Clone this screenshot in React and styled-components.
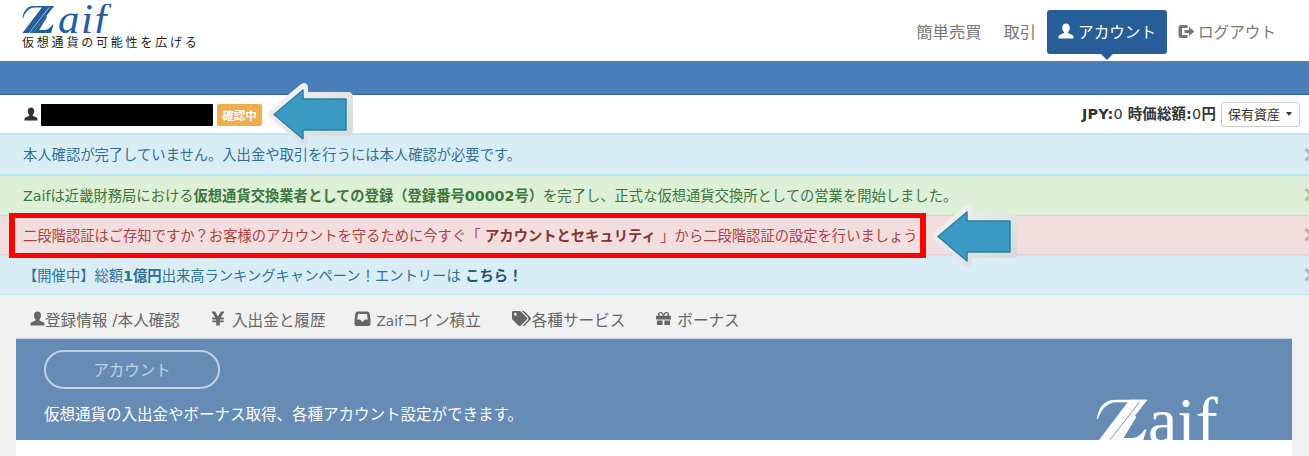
import React from "react";
import styled, { createGlobalStyle } from "styled-components";
import { FaTags, FaGift } from "react-icons/fa";

const GlobalStyle = createGlobalStyle`
  html, body { margin: 0; padding: 0; }
  body {
    background: #f1f1f1;
    font-family: "DejaVu Sans", "Noto Sans CJK JP", sans-serif;
    font-size: 14px;
    color: #333;
    overflow: hidden;
  }
`;

const Page = styled.div`
  position: relative;
  width: 1309px;
  height: 456px;
  overflow: hidden;
`;

const Header = styled.header`
  height: 61px;
  background: #fff;
  display: flex;
  justify-content: space-between;
  align-items: flex-start;
  padding: 0 22px;
  box-sizing: border-box;
`;

const Brand = styled.div`
  display: flex;
  flex-direction: column;
  width: 180px;
  padding-top: 4px;
`;

const LogoRow = styled.div`
  display: flex;
  align-items: flex-end;
  color: ${(p) => p.$color};
`;

const LogoText = styled.span`
  font-family: "Liberation Serif", serif;
  font-style: italic;
  font-size: 43px;
  line-height: 29px;
  height: 29px;
  padding-right: 6px;
  margin-left: -4px;
  letter-spacing: 1.5px;
  overflow: hidden;
`;

const Tagline = styled.div`
  font-size: 12px;
  line-height: 15px;
  margin-top: 3px;
  letter-spacing: 2.8px;
  color: #222;
  white-space: nowrap;
`;

const Nav = styled.nav`
  display: flex;
  align-items: flex-start;
  padding-top: 10px;
`;

const NavItem = styled.a`
  position: relative;
  display: flex;
  align-items: center;
  gap: ${(p) => (p.$active ? 4 : 3)}px;
  height: 44px;
  box-sizing: border-box;
  padding: 0 11px 2px;
  border-radius: 3px;
  font-size: ${(p) => p.$size || 15.6}px;
  color: ${(p) => (p.$active ? "#fff" : "#777")};
  background: ${(p) => (p.$active ? "#275d98" : "transparent")};
  white-space: nowrap;

  ${(p) =>
    p.$active &&
    `&::after {
      content: "";
      position: absolute;
      left: 50%;
      bottom: -6px;
      margin-left: -6px;
      border-left: 6px solid transparent;
      border-right: 6px solid transparent;
      border-top: 6px solid #275d98;
    }`}
`;

const BlueBar = styled.div`
  height: 33px;
  background: #4a7ebb;
  border-bottom: 1px solid #2f659f;
`;

const UserRow = styled.div`
  height: 38px;
  background: #fff;
  border-bottom: 1px solid #c9e6ef;
  display: flex;
  align-items: center;
  justify-content: space-between;
  padding: 0 9px 0 24px;
`;

const UserInfo = styled.div`
  display: flex;
  align-items: center;
`;

const Redacted = styled.div`
  width: 172px;
  height: 22px;
  background: #000;
  margin: 2px 4px 0 3px;
  border-radius: 1px;
`;

const Badge = styled.span`
  display: inline-flex;
  align-items: center;
  justify-content: center;
  width: 45px;
  height: 22px;
  background: #f0ad4e;
  color: #fff;
  font-size: 11.5px;
  font-weight: 700;
  border-radius: 2px;
  margin-top: 1px;
`;

const Balance = styled.div`
  display: flex;
  align-items: center;
  gap: 5px;
  font-size: 14.4px;
  color: #333;
  white-space: nowrap;
`;

const BalanceText = styled.span`
  letter-spacing: 0.2px;
  margin-bottom: 3px;
`;

const Strong = styled.b`
  font-weight: 700;
`;

const SelectButton = styled.button`
  display: flex;
  align-items: center;
  gap: 6px;
  height: 25px;
  width: 79px;
  padding: 0 0 1px 6px;
  border: 1px solid #ccc;
  border-radius: 3px;
  background: #fff;
  font-family: inherit;
  font-size: 13px;
  color: #333;
  white-space: nowrap;
`;

const Caret = styled.span`
  width: 0;
  height: 0;
  border-left: 3.5px solid transparent;
  border-right: 3.5px solid transparent;
  border-top: 4px solid #333;
`;

const Alert = styled.div`
  position: relative;
  box-sizing: border-box;
  height: ${(p) => p.$h || 40}px;
  display: flex;
  align-items: center;
  padding: 0 0 2px 23px;
  font-size: 14.3px;
  white-space: pre;
  color: ${(p) => p.$color};
  background: ${(p) => p.$bg};
  border-top: 1px solid ${(p) => p.$border};
  border-bottom: 1px solid ${(p) => p.$border};
`;

const AlertBold = styled.b`
  font-weight: 700;
  color: ${(p) => p.$color || "inherit"};
`;

const Close = styled.span`
  position: absolute;
  left: 1303px;
  top: 50%;
  transform: translateY(-50%);
  font-family: "Liberation Sans", sans-serif;
  font-size: 28px;
  font-weight: 700;
  line-height: 1;
  color: #000;
  opacity: 0.2;
`;

const Tabs = styled.div`
  height: 43px;
  display: flex;
  align-items: center;
  padding: 4px 0 0 30px;
  box-sizing: border-box;
`;

const Tab = styled.a`
  display: flex;
  align-items: center;
  gap: ${(p) => p.$gap || 0}px;
  margin-right: ${(p) => p.$mr || 0}px;
  font-size: 15.6px;
  color: #666;
  white-space: nowrap;
  svg { flex: none; }
`;

const TabLatin = styled.span`
  font-size: 13.6px;
`;

const Content = styled.main`
  margin: 0 17px 0 16px;
  background: #fff;
  height: 118px;
`;

const Hero = styled.section`
  position: relative;
  height: 102px;
  box-sizing: border-box;
  background: #668cb6;
  border-top: 1px solid #c8d4e0;
  padding: 11px 28px 0;
  overflow: hidden;
`;

const PillButton = styled.div`
  width: 176px;
  height: 39px;
  box-sizing: border-box;
  border: 2px solid #c2d1e2;
  border-radius: 20px;
  padding-bottom: 2px;
  display: flex;
  align-items: center;
  justify-content: center;
  font-size: 15.5px;
  color: #c2d1e2;
`;

const HeroText = styled.p`
  margin: 15px 0 0;
  font-size: 15.5px;
  line-height: 22px;
  color: #fff;
  white-space: nowrap;
`;

const HeroLogo = styled.div`
  position: absolute;
  left: 1080px;
  top: 59px;
`;

const HeroLogoText = styled.span`
  font-family: "Liberation Serif", serif;
  font-size: 66px;
  line-height: 44px;
  height: 44px;
  color: #fff;
  margin-left: -12px;
`;

const Highlight = styled.div`
  position: absolute;
  left: 9px;
  top: 213px;
  width: 917px;
  height: 45px;
  box-sizing: border-box;
  border: solid #fe0000;
  border-width: 5px 6px;
  pointer-events: none;
`;

const ArrowWrap = styled.div`
  position: absolute;
  left: ${(p) => p.$x}px;
  top: ${(p) => p.$y}px;
  line-height: 0;
`;

const UserIcon = ({ size = 14, color = "currentColor" }) => (
  <svg width={size} height={size} viewBox="0 0 14 14" fill={color}>
    <path d="M7 0.5c2 0 3.3 1.5 3.3 3.6 0 1.5-.6 2.9-1.4 3.7-.3.4-.2 1 .3 1.2l2.9 1.2c.9.4 1.4 1 1.4 1.9v1.4H.5v-1.4c0-.9.5-1.5 1.4-1.9l2.9-1.2c.5-.2.6-.8.3-1.2-.8-.8-1.4-2.2-1.4-3.7C3.7 2 5 .5 7 .5z" />
  </svg>
);

const LogoutIcon = () => (
  <svg width="17" height="15" viewBox="0 0 17 15" fill="#777">
    <path d="M3 1h6.5v3H4.5a.5.5 0 0 0-.5.5v6a.5.5 0 0 0 .5.5h5v3H3a2.5 2.5 0 0 1-2.5-2.5v-8A2.5 2.5 0 0 1 3 1z" />
    <path d="M6.5 6h4.5V3l5.5 4.5L11 12V9H6.5z" />
  </svg>
);

const YenIcon = () => (
  <svg width="14" height="15" viewBox="0 0 14 15" fill="#666">
    <path d="M0.5 0.5h3.6L7 5.6 9.9 0.5h3.6L9.7 6.6h3v1.8H8.8v1.1h3.9v1.8H8.8v3.2H5.2v-3.2H1.3V9.5h3.9V8.4H1.3V6.6h3z" />
  </svg>
);

const InboxIcon = () => (
  <svg width="17" height="15" viewBox="0 0 17 15">
    <path d="M3.5.5h10a2 2 0 0 1 2 1.6l1 6.4v4.5a2 2 0 0 1-2 2H2.5a2 2 0 0 1-2-2V8.5l1-6.4a2 2 0 0 1 2-1.6z" fill="#666" />
    <path d="M4 3h9l.8 5.5h-2.8l-2.5 2.6L6 8.5H3.2z" fill="#f1f1f1" />
  </svg>
);

const ZMark = ({ width, height, color }) => (
  <svg width={width} height={height} viewBox="0 0 40 28" fill={color}>
    <path d="M0.5 13C1.5 5.5 5.5 1 12 1h20l-1 1.6H13C7.5 2.6 3.5 6.5 1.2 13z" />
    <path d="M21 1h7L7 28H0.5z" />
    <path d="M28.6 1h3.6L11 28H7.5z" />
    <path d="M11 28l13-17 1.2.8-8 13.2h4.5c3.5 0 6.5-1.5 8.8-5.5l1 .3-2.5 8.2z" />
  </svg>
);

const BlueArrow = () => (
  <svg width="85" height="64" viewBox="0 0 85 64">
    <defs>
      <linearGradient id="arrowEdge" x1="0" y1="0" x2="1" y2="1">
        <stop offset="0" stopColor="#f6f6f6" />
        <stop offset="1" stopColor="#d6d6d6" />
      </linearGradient>
    </defs>
    <path
      d="M36 1c2 0 4 2 4 4v5h40c3 0 5 2 5 5v34c0 3-2 5-5 5H40v5c0 2-2 4-4 4-1 0-3-1-4-2L2 36c-2-2-2-6 0-8L32 3c1-1 3-2 4-2z"
      fill="url(#arrowEdge)"
    />
    <path
      d="M35 8v9h43v31H35v9L6 32.5z"
      fill="#3b9ac4"
      stroke="#2d7ea6"
      strokeWidth="1.5"
      strokeLinejoin="round"
    />
  </svg>
);

export default function App() {
  return (
    <Page>
      <GlobalStyle />
      <Header>
        <Brand>
          <LogoRow $color="#235f9f">
            <ZMark width={40} height={28} color="#235f9f" />
            <LogoText>aif</LogoText>
          </LogoRow>
          <Tagline>仮想通貨の可能性を広げる</Tagline>
        </Brand>
        <Nav>
          <NavItem $size={16.3}>簡単売買</NavItem>
          <NavItem $size={16.3}>取引</NavItem>
          <NavItem $active>
            <UserIcon size={16} color="#fff" />
            アカウント
          </NavItem>
          <NavItem>
            <LogoutIcon />
            ログアウト
          </NavItem>
        </Nav>
      </Header>
      <BlueBar />
      <UserRow>
        <UserInfo>
          <UserIcon size={14} color="#333" />
          <Redacted />
          <Badge>確認中</Badge>
        </UserInfo>
        <Balance>
          <BalanceText>
            <Strong>JPY:</Strong>0 <Strong>時価総額:</Strong>0<Strong>円</Strong>
          </BalanceText>
          <SelectButton>
            保有資産
            <Caret />
          </SelectButton>
        </Balance>
      </UserRow>
      <Alert $h={41} $bg="#d9edf7" $border="#bce8f1" $color="#31708f">
        本人確認が完了していません。入出金や取引を行うには本人確認が必要です。
        <Close>×</Close>
      </Alert>
      <Alert $bg="#dff0d8" $border="#d6e9c6" $color="#3c763d">
        Zaifは近畿財務局における<AlertBold>仮想通貨交換業者としての登録（登録番号00002号）</AlertBold>を完了し、正式な仮想通貨交換所としての営業を開始しました。
        <Close>×</Close>
      </Alert>
      <Alert $bg="#f2dede" $border="#ebccd1" $color="#a94442">
        二段階認証はご存知ですか？お客様のアカウントを守るために今すぐ「 <AlertBold $color="#843534">アカウントとセキュリティ</AlertBold> 」から二段階認証の設定を行いましょう
        <Close>×</Close>
      </Alert>
      <Alert $bg="#d9edf7" $border="#bce8f1" $color="#31708f">
        【開催中】総額<AlertBold>1億円</AlertBold>出来高ランキングキャンペーン！エントリーは <AlertBold $color="#245269">こちら！</AlertBold>
        <Close>×</Close>
      </Alert>
      <Tabs>
        <Tab $mr={31}>
          <UserIcon size={15} color="#666" />
          登録情報 /本人確認
        </Tab>
        <Tab $mr={28} $gap={7}>
          <YenIcon />
          入出金と履歴
        </Tab>
        <Tab $mr={31} $gap={6}>
          <InboxIcon />
          <span><TabLatin>Zaif</TabLatin>コイン積立</span>
        </Tab>
        <Tab $mr={31} $gap={1}>
          <FaTags size={19} />
          各種サービス
        </Tab>
        <Tab $gap={6}>
          <FaGift size={15} />
          ボーナス
        </Tab>
      </Tabs>
      <Content>
        <Hero>
          <PillButton>アカウント</PillButton>
          <HeroText>仮想通貨の入出金やボーナス取得、各種アカウント設定ができます。</HeroText>
          <HeroLogo>
            <LogoRow $color="#fff">
              <ZMark width={64} height={45} color="#fff" />
              <HeroLogoText>aif</HeroLogoText>
            </LogoRow>
          </HeroLogo>
        </Hero>
      </Content>
      <Highlight />
      <ArrowWrap $x={268} $y={82}>
        <BlueArrow />
      </ArrowWrap>
      <ArrowWrap $x={932} $y={204}>
        <BlueArrow />
      </ArrowWrap>
    </Page>
  );
}
